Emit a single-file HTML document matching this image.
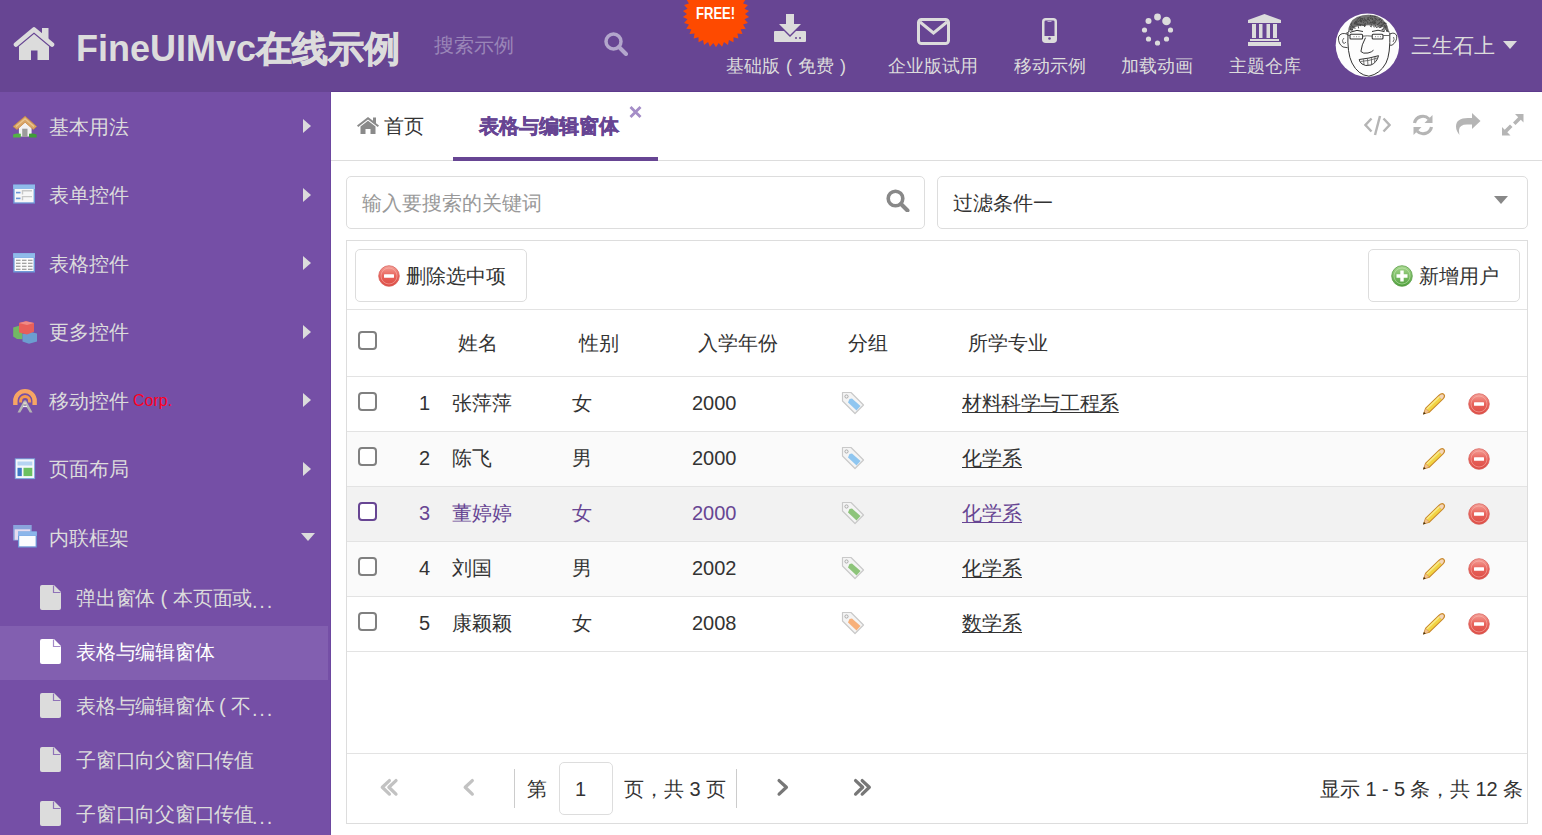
<!DOCTYPE html>
<html><head><meta charset="utf-8">
<style>
*{box-sizing:border-box;margin:0;padding:0}
html,body{width:1542px;height:835px;overflow:hidden;background:#fff;font-family:"Liberation Sans",sans-serif;color:#333}
.a{position:absolute;white-space:nowrap}
#hd{position:absolute;left:0;top:0;width:1542px;height:92px;background:#674593}
#sb{position:absolute;left:0;top:92px;width:331px;height:743px;background:#754fa6;border-right:1px solid #6d47a0}
.ht{color:#dcdcdc;font-size:18px;line-height:20px}
.mi{color:#dcdcdc;font-size:20px;line-height:24px}
.arr{position:absolute;width:0;height:0;border-top:7px solid transparent;border-bottom:7px solid transparent;border-left:8px solid #dcdcdc}
.sub{color:#dcdcdc;font-size:20px;line-height:24px;letter-spacing:-0.25px}
.box{position:absolute;border:1px solid #ddd;border-radius:5px;background:#fff}
.gl{position:absolute;left:347px;width:1180px;height:1px;background:#e3e3e3}
.td{font-size:20px;line-height:24px;color:#333}
.u{text-decoration:underline;text-decoration-thickness:1px;text-underline-offset:2px}
.cb{position:absolute;width:19px;height:19px;border:2px solid #808080;border-radius:4px;background:#fff}
</style></head><body>
<div id="hd">
  <!-- home icon -->
  <svg class="a" style="left:13px;top:27px" width="42" height="34" viewBox="0 0 42 34">
<path d="M3 17.5 L21 2.5 L39 17.5" fill="none" stroke="#dcdcdc" stroke-width="4.6" stroke-linecap="round" stroke-linejoin="round"/>
<rect x="29" y="1" width="6.5" height="11" fill="#dcdcdc"/>
<path d="M6 19.5 L21 7 L36 19.5 V33 H24.5 V23.5 H18 V33 H6 Z" fill="#dcdcdc"/>
</svg>
  <div class="a" style="left:76px;top:27.5px;font-size:36px;line-height:42px;font-weight:bold;color:#dcdcdc">FineUIMvc<span style="-webkit-text-stroke:0.9px #dcdcdc">在线示例</span></div>
  <div class="a" style="left:434px;top:33px;font-size:20px;line-height:24px;color:#9a86b8">搜索示例</div>
  <svg class="a" style="left:604px;top:32px" width="24" height="24" viewBox="0 0 24 24">
    <circle cx="9.5" cy="9.5" r="7.5" fill="none" stroke="#b3a6cc" stroke-width="3.5"/>
    <path d="M15 15 L22 22" stroke="#b3a6cc" stroke-width="4" stroke-linecap="round"/>
  </svg>
  <!-- FREE badge -->
  <svg class="a" style="left:681.5px;top:-20.5px" width="68" height="68" viewBox="-34 -34 68 68" id="burst"><polygon fill="#fe4a00" points="0.00,-33.20 2.68,-28.88 6.10,-32.63 7.94,-27.89 11.99,-30.96 12.93,-25.96 17.48,-28.23 17.48,-23.14 22.37,-24.54 21.43,-19.54 26.49,-20.01 24.66,-15.27 29.72,-14.80 27.04,-10.48 31.93,-9.09 28.51,-5.33 33.06,-3.06 29.00,0.00 33.06,3.06 28.51,5.33 31.93,9.09 27.04,10.48 29.72,14.80 24.66,15.27 26.49,20.01 21.43,19.54 22.37,24.54 17.48,23.14 17.48,28.23 12.93,25.96 11.99,30.96 7.94,27.89 6.10,32.63 2.68,28.88 0.00,33.20 -2.68,28.88 -6.10,32.63 -7.94,27.89 -11.99,30.96 -12.93,25.96 -17.48,28.23 -17.48,23.14 -22.37,24.54 -21.43,19.54 -26.49,20.01 -24.66,15.27 -29.72,14.80 -27.04,10.48 -31.93,9.09 -28.51,5.33 -33.06,3.06 -29.00,0.00 -33.06,-3.06 -28.51,-5.33 -31.93,-9.09 -27.04,-10.48 -29.72,-14.80 -24.66,-15.27 -26.49,-20.01 -21.43,-19.54 -22.37,-24.54 -17.48,-23.14 -17.48,-28.23 -12.93,-25.96 -11.99,-30.96 -7.94,-27.89 -6.10,-32.63 -2.68,-28.88"/></svg>
  <div class="a" style="left:696px;top:4px;font-size:16.5px;line-height:19px;font-weight:bold;color:#fff;transform:scaleX(0.79);transform-origin:0 0">FREE!</div>
  <!-- header items -->
  <svg class="a" style="left:774px;top:14px" width="32" height="28" viewBox="0 0 32 28">
    <path d="M12 0 H20 V10 H27 L16 21 L5 10 H12 Z" fill="#dcdcdc"/>
    <path d="M0 18 Q0 17 1 17 H10 L16 23 L22 17 H31 Q32 17 32 18 V27 Q32 28 31 28 H1 Q0 28 0 27 Z" fill="#dcdcdc"/>
    <circle cx="22" cy="24" r="1" fill="#674593"/><circle cx="26" cy="24" r="1" fill="#674593"/>
  </svg>
  <div class="a ht" style="left:726px;top:56px">基础版</div><div class="a ht" style="left:786px;top:56px">(</div><div class="a ht" style="left:798px;top:56px">免费</div><div class="a ht" style="left:840px;top:56px">)</div>
  <svg class="a" style="left:917px;top:18px" width="33" height="27" viewBox="0 0 33 27">
    <rect x="1.5" y="1.5" width="30" height="24" rx="3" fill="none" stroke="#dcdcdc" stroke-width="3"/>
    <path d="M3 4 L16.5 15 L30 4" fill="none" stroke="#dcdcdc" stroke-width="3"/>
  </svg>
  <div class="a ht" style="left:888px;top:56px">企业版试用</div>
  <svg class="a" style="left:1042px;top:18px" width="15" height="25" viewBox="0 0 15 25">
    <rect x="1.25" y="1.25" width="12.5" height="22.5" rx="2.5" fill="none" stroke="#dcdcdc" stroke-width="2.5"/>
    <rect x="2" y="18" width="11" height="5" fill="#dcdcdc"/>
    <circle cx="7.5" cy="20.5" r="1.3" fill="#674593"/>
    <rect x="5.5" y="3" width="4" height="1" fill="#b9abd0"/>
  </svg>
  <div class="a ht" style="left:1014px;top:56px">移动示例</div>
  <svg class="a" style="left:1140px;top:13px" width="34" height="34" viewBox="0 0 34 34">
    <circle cx="17.5" cy="4" r="3.4" fill="#dcdcdc"/>
    <circle cx="26.5" cy="8" r="4.3" fill="#dcdcdc"/>
    <circle cx="30.5" cy="17" r="2.6" fill="#dcdcdc"/>
    <circle cx="26.5" cy="26" r="2.6" fill="#dcdcdc"/>
    <circle cx="17.5" cy="30" r="2.6" fill="#dcdcdc"/>
    <circle cx="8.5" cy="26" r="2.6" fill="#dcdcdc"/>
    <circle cx="4.5" cy="17" r="2.6" fill="#dcdcdc"/>
    <circle cx="8.5" cy="8" r="3" fill="#dcdcdc"/>
  </svg>
  <div class="a ht" style="left:1121px;top:56px">加载动画</div>
  <svg class="a" style="left:1247px;top:13px" width="35" height="34" viewBox="0 0 35 34">
    <path d="M17.5 1 L34 7 V10 H1 V7 Z" fill="#dcdcdc"/>
    <rect x="5" y="11" width="4" height="14" fill="#dcdcdc"/>
    <rect x="12" y="11" width="3.5" height="14" fill="#dcdcdc"/>
    <rect x="19.5" y="11" width="3.5" height="14" fill="#dcdcdc"/>
    <rect x="26" y="11" width="4" height="14" fill="#dcdcdc"/>
    <rect x="3" y="26" width="29" height="2" fill="#dcdcdc"/>
    <rect x="1" y="29" width="33" height="4" fill="#dcdcdc"/>
  </svg>
  <div class="a ht" style="left:1229px;top:56px">主题仓库</div>
  <!-- avatar -->
  <svg class="a" style="left:1335px;top:13px" width="64" height="64" viewBox="0 0 64 64">
<circle cx="32.4" cy="32.2" r="31.7" fill="#fdfdfd"/>
<path d="M13 20 Q13.5 8 22 4 Q32 0 42 3 Q52 7 54.5 20 Q50 14 44 13 Q34 11.5 24 13 Q16 14.5 13 20 Z" fill="#707070"/>
<path d="M22.8 10.4 l0.8 1.8 M38.7 3.4 l2.2 0.1 M23.6 7.0 l-1.8 0.0 M47.3 11.4 l-0.6 1.3 M39.0 12.1 l-0.2 2.1 M40.5 4.0 l-1.4 1.3 M25.4 4.1 l-1.6 0.7 M42.5 13.1 l-1.4 1.8 M29.2 11.1 l0.4 2.3 M49.0 9.4 l1.3 0.6 M52.6 17.2 l-0.6 1.4 M33.8 6.2 l0.9 1.7 M37.0 12.1 l-1.3 1.9 M48.1 16.3 l-0.7 1.2 M48.3 16.2 l-1.8 0.6 M42.3 6.2 l-1.6 1.0 M24.7 4.8 l-2.1 1.1 M16.6 16.0 l0.4 1.3 M25.0 11.8 l-1.2 0.5 M38.2 3.1 l-1.0 1.2 M49.1 16.7 l-0.0 2.4 M25.7 4.5 l-0.4 1.2 M21.1 10.0 l-0.5 1.3 M14.7 18.2 l1.3 2.0 M49.8 12.2 l0.2 1.8 M39.4 9.3 l-0.4 1.9 M51.6 16.6 l0.4 2.0 M22.7 8.1 l-1.8 0.1 M35.5 2.2 l0.5 1.8 M13.8 18.1 l-0.5 1.2 M38.7 7.7 l-0.9 1.4 M42.0 11.5 l1.3 0.1 M40.7 13.4 l1.2 1.2 M37.3 5.9 l0.7 1.4 M28.1 9.1 l1.0 1.3 M44.7 5.6 l-0.4 2.0 M25.7 5.9 l-1.2 0.9 M20.7 10.4 l-0.8 1.1 M26.2 6.9 l-1.5 0.9 M48.1 9.2 l1.0 1.7 M49.3 12.5 l1.0 0.9 M34.7 4.1 l-1.8 1.3 M20.5 9.1 l-1.6 1.1 M46.1 9.5 l1.4 0.6 M45.5 8.5 l0.8 1.5 M30.2 6.7 l-1.3 0.3 M13.2 19.4 l-2.2 0.9 M30.8 12.6 l-1.4 0.3 M43.6 13.0 l-0.9 1.6 M24.9 7.5 l1.0 0.8 M37.1 5.5 l-1.0 0.7 M50.0 14.9 l-2.2 0.5 M49.9 13.9 l2.1 0.1 M20.0 9.6 l-0.9 1.6 M30.0 12.5 l-0.6 1.5 M23.4 13.3 l0.2 2.1 M27.4 5.1 l-0.2 2.2 M20.0 14.0 l-2.1 0.5 M46.8 6.9 l-0.9 2.1 M15.0 16.1 l1.2 1.4 M30.3 7.4 l-0.9 0.8 M15.2 15.5 l1.2 0.5 M53.0 18.6 l1.7 0.5 M26.0 6.8 l0.9 1.8 M37.1 6.3 l1.3 0.9 M18.1 13.1 l-1.0 1.3 M16.3 11.4 l0.7 1.8 M45.1 9.3 l-1.6 1.1 M30.7 6.3 l0.0 2.0 M30.2 9.8 l0.2 1.5 M35.0 9.7 l1.7 0.4 M30.5 11.8 l-1.6 0.3 M49.8 15.6 l1.2 1.3 M18.0 15.2 l-1.1 2.0 M45.5 12.2 l-1.3 1.4 M17.2 13.9 l1.4 0.0 M44.7 5.9 l1.3 0.4 M49.1 10.1 l2.2 0.2 M18.0 15.5 l-1.1 1.9 M52.0 17.2 l-1.0 0.7 M44.5 10.2 l-0.8 1.0 M43.7 14.0 l1.6 0.3 M36.1 11.2 l1.0 1.0 M23.2 10.9 l-1.2 1.2 M28.1 7.0 l0.8 1.5 M16.4 13.8 l-1.7 0.1 M43.6 6.4 l-1.2 1.7 M40.6 8.8 l0.1 2.0 M49.8 10.4 l2.0 0.6 M50.6 13.9 l0.4 2.0 M20.6 8.9 l1.5 1.1 M25.9 6.0 l-1.3 1.9 M25.1 11.1 l0.6 2.1 M37.0 5.2 l1.0 0.8 M32.7 6.2 l1.4 0.8 M26.2 11.5 l2.2 1.0 M32.7 8.6 l0.2 2.2 M46.7 11.8 l0.1 2.1 M48.1 11.3 l-1.6 1.7 M32.2 4.6 l1.5 1.4 M40.7 13.4 l-1.3 0.7 M20.8 8.8 l1.7 1.1 M48.2 15.6 l1.6 1.6 M25.9 8.0 l-0.9 1.0 M16.8 16.1 l1.0 1.3 M36.8 9.6 l1.6 0.0 M30.9 7.5 l1.5 1.2 M52.2 16.7 l-0.2 1.3 M24.3 11.0 l2.1 0.8 M50.3 10.4 l-1.6 0.3 M44.7 12.7 l1.2 1.6 M39.8 11.6 l1.4 1.6 M52.4 17.7 l-0.2 1.3 M33.2 5.9 l-1.3 1.6 M36.2 4.2 l-0.9 1.8 M20.3 14.8 l-0.6 1.2 M51.2 11.6 l1.0 1.8 M37.5 8.4 l-0.8 1.6 M25.8 5.4 l2.0 0.4 M43.9 10.3 l-1.1 1.2 M23.9 8.3 l-1.2 0.5 M33.7 4.7 l-1.2 1.1 M26.6 7.5 l-0.3 2.1 M27.5 12.0 l1.4 0.5 M17.1 10.2 l-1.6 1.3 M20.6 8.3 l0.5 2.0 M46.4 13.4 l-0.4 1.3 M29.3 4.6 l-0.2 1.9 M21.3 8.4 l-1.0 0.8 M45.9 14.4 l-1.6 0.3 M35.7 8.5 l-1.0 2.2 M41.2 6.7 l-1.6 0.8 M37.7 10.3 l2.1 0.0 M40.1 8.4 l-0.1 1.7 M20.9 11.2 l1.8 0.2 M39.5 7.7 l-0.5 2.3 M49.6 10.1 l-1.5 1.2 M15.1 16.4 l1.0 0.9 M35.1 12.3 l1.2 1.9 M41.5 5.1 l-1.7 0.8" stroke="#444" stroke-width="0.9" fill="none"/>
<path d="M13 19.6 Q12 40 17 50 Q23 62 33.9 63.2 Q45 61 51 50 Q55.5 41 54.8 20" fill="none" stroke="#333" stroke-width="1"/>
<path d="M13 21.5 Q6 18.5 3.5 24 Q3 31 8 34 L12.6 34.7" fill="none" stroke="#333" stroke-width="0.9"/>
<path d="M9 25 Q6.5 27 8 30 Q10 31 11 29" fill="none" stroke="#444" stroke-width="0.8"/>
<path d="M54.8 21 Q60 18.5 61.8 23 Q62 29 57 32.2 L54.8 32.2" fill="none" stroke="#333" stroke-width="0.9"/>
<path d="M58.5 24 Q60 26 58 29" fill="none" stroke="#444" stroke-width="0.8"/>
<path d="M16 19 Q22 16 28 18.5 M37 18.5 Q43 16 49 18.5" fill="none" stroke="#333" stroke-width="1"/>
<rect x="15" y="21.3" width="12.6" height="4.7" rx="1" fill="none" stroke="#333" stroke-width="1.1"/>
<rect x="37.2" y="21.3" width="10.8" height="4.7" rx="1" fill="none" stroke="#333" stroke-width="1.1"/>
<path d="M27.6 23.2 Q32.4 22.4 37.2 23.2 M15 22.5 L12.6 22.5 M48 22.5 L54.8 22.5" fill="none" stroke="#555" stroke-width="0.9"/>
<path d="M18.5 23.7 h1 M21 23.7 h1 M23.5 23.7 h1 M40 23.7 h1 M42.5 23.7 h1 M45 23.7 h1" stroke="#777" stroke-width="0.9"/>
<path d="M30.5 24.7 Q26.5 32 25.9 38.5 Q28 41 33 40 Q37 39 38.5 37.2" fill="none" stroke="#333" stroke-width="1"/>
<path d="M24.2 46.5 Q34 45.5 43.5 42.7 Q42 49.5 36 52 Q30 53.5 27 51 Q24.5 49 24.2 46.5 Z" fill="#fafafa" stroke="#333" stroke-width="1"/>
<path d="M25.5 48.5 Q34 48 42.5 45 M28.5 46.3 L29 51.5 M32.5 45.8 L33 52.8 M36.5 45.2 L36.5 52 M40 44 L39.5 49.5" fill="none" stroke="#555" stroke-width="0.8"/>
</svg>
  <div class="a" style="left:1411px;top:34px;font-size:21px;line-height:24px;color:#dcdcdc">三生石上</div>
  <div class="a" style="left:1503px;top:41px;width:0;height:0;border-left:7px solid transparent;border-right:7px solid transparent;border-top:8px solid #dcdcdc"></div>
</div>

<div id="sb">
<svg class="a" style="left:5px;top:13px" width="40" height="40" viewBox="0 0 40 40"><path d="M13.9 20 L20 15.5 L26.6 20 V31.5 H13.9 Z" fill="#f2f2f2"/>
<rect x="17.2" y="23.7" width="5.3" height="8.2" fill="#9b9b9b"/>
<path d="M8.1 29.5 Q12 27.8 15.8 28.8 V32.6 H8.1 Z" fill="#52b344"/>
<path d="M24 28.8 Q28 27.8 31.6 29.5 V32.6 H24 Z" fill="#3f9e37"/>
<path d="M8.1 21.5 L20.1 11.3 L31.6 21.5 L28.3 24.5 L20.1 17.2 L12 24.5 Z" fill="#d9a566" stroke="#c98a45" stroke-width="0.8" stroke-linejoin="round"/>
<path d="M11 21.5 L20.1 13.8 L29 21.5" fill="none" stroke="#e9c48e" stroke-width="1.4"/></svg>
<div class="a mi" style="left:49px;top:22.5px">基本用法</div>
<div class="arr" style="left:303px;top:27px"></div>
<svg class="a" style="left:5px;top:83px" width="40" height="40" viewBox="0 0 40 40"><rect x="8.2" y="9.6" width="21.8" height="19" fill="#6f9ad8"/>
<rect x="8.2" y="9.6" width="21.8" height="4.4" fill="#8fbbea"/>
<rect x="9.6" y="14" width="19" height="13.3" fill="#f7f7f7"/>
<rect x="11" y="16.8" width="4.5" height="1.6" fill="#6a93d6"/>
<rect x="11" y="22.6" width="4.5" height="1.6" fill="#6a93d6"/>
<path d="M17.5 19.5 V15.8 H27 M17.5 25.3 V21.6 H27" fill="none" stroke="#c8c8c8" stroke-width="1.4"/></svg>
<div class="a mi" style="left:49px;top:91px">表单控件</div>
<div class="arr" style="left:303px;top:95.5px"></div>
<svg class="a" style="left:5px;top:151px" width="40" height="40" viewBox="0 0 40 40"><rect x="8.2" y="10.2" width="21.8" height="19.3" fill="#6f9ad8"/>
<rect x="8.2" y="10.2" width="21.8" height="4.6" fill="#8fbbea"/>
<rect x="9.6" y="15" width="19" height="13" fill="#fafafa"/>
<g fill="#9a9a9a"><rect x="11" y="16.7" width="4.5" height="1.2"/><rect x="17" y="16.7" width="4.5" height="1.2"/><rect x="23" y="16.7" width="4.5" height="1.2"/>
<rect x="11" y="19.7" width="4.5" height="1.2"/><rect x="17" y="19.7" width="4.5" height="1.2"/><rect x="23" y="19.7" width="4.5" height="1.2"/>
<rect x="11" y="22.7" width="4.5" height="1.2"/><rect x="17" y="22.7" width="4.5" height="1.2"/><rect x="23" y="22.7" width="4.5" height="1.2"/>
<rect x="11" y="25.7" width="4.5" height="1.2"/><rect x="17" y="25.7" width="4.5" height="1.2"/><rect x="23" y="25.7" width="4.5" height="1.2"/></g></svg>
<div class="a mi" style="left:49px;top:159.5px">表格控件</div>
<div class="arr" style="left:303px;top:164px"></div>
<svg class="a" style="left:5px;top:220px" width="40" height="40" viewBox="0 0 40 40"><path d="M8.2 15.5 L14 13.8 L17.5 16 V27.2 L12 27 L8.2 24.5 Z" fill="#72b864"/>
<path d="M17.5 22 L26 20 L32 21.5 V29.5 L24 31.7 L17.5 29.5 Z" fill="#6c9ed0"/>
<path d="M14 11 L21 9.3 L29 11 V19.8 L22 22.5 L14 20.5 Z" fill="#e85f5a"/>
<path d="M14 11 L21 9.3 L29 11 L22 13 Z" fill="#f08a84"/></svg>
<div class="a mi" style="left:49px;top:228px">更多控件</div>
<div class="arr" style="left:303px;top:232.5px"></div>
<svg class="a" style="left:5px;top:288px" width="40" height="40" viewBox="0 0 40 40"><path d="M10.35 24.9 V20.8 A9.65 9.65 0 0 1 29.65 20.8 V24.9" fill="none" stroke="#f7a564" stroke-width="4.4"/>
<path d="M15.6 22.5 V21.1 A4.5 4.5 0 0 1 24.6 21.1 V22.5" fill="none" stroke="#f59a50" stroke-width="3"/>
<path d="M19 20.5 H21 L27.5 32.5 H24.8 L20 24.5 L15.2 32.5 H12.5 Z" fill="#b5b5b5"/>
<rect x="18.5" y="22.5" width="3" height="1.3" fill="#f0e0d0"/><rect x="18" y="25.8" width="4" height="1.3" fill="#f0f0f0"/></svg>
<div class="a mi" style="left:49px;top:296.5px">移动控件</div>
<div class="a" style="left:133px;top:300px;font-size:16px;line-height:18px;color:#ff0022">Corp.</div>
<div class="arr" style="left:303px;top:301px"></div>
<svg class="a" style="left:5px;top:355.5px" width="40" height="40" viewBox="0 0 40 40"><rect x="9.8" y="10.3" width="20.3" height="20.8" fill="#7aa3dc"/>
<rect x="10.8" y="11.3" width="18.3" height="18.8" fill="#f4f7fb"/>
<rect x="12.5" y="13.5" width="14.8" height="4" fill="#b6d4f2"/>
<rect x="12.5" y="19.8" width="4.3" height="8.3" fill="#3f78c6"/>
<rect x="18.5" y="19.8" width="8.8" height="8.3" fill="#6cc061"/></svg>
<div class="a mi" style="left:49px;top:365px">页面布局</div>
<div class="arr" style="left:303px;top:369.5px"></div>
<svg class="a" style="left:5px;top:424px" width="40" height="40" viewBox="0 0 40 40"><rect x="8.2" y="9" width="18.5" height="15.5" fill="#8aa4dc"/>
<rect x="9.7" y="13.3" width="15.5" height="10.5" fill="#e6dcef"/>
<rect x="13" y="15.5" width="18.8" height="16" fill="#6e9ad8"/>
<rect x="13" y="15.5" width="18.8" height="4.3" fill="#8cb6ea"/>
<rect x="14.2" y="20" width="16.4" height="10.3" fill="#fbfcfe"/></svg>
<div class="a mi" style="left:49px;top:433.5px">内联框架</div>
<div class="a" style="left:301px;top:440.5px;width:0;height:0;border-left:7px solid transparent;border-right:7px solid transparent;border-top:8px solid #dcdcdc"></div>
<svg class="a" style="left:40px;top:493px" width="21" height="25" viewBox="0 0 21 25"><path d="M2 0 H14 L21 7 V23 Q21 25 19 25 H2 Q0 25 0 23 V2 Q0 0 2 0 Z" fill="#dcdcdc"/><path d="M14 0 V7 H21" fill="#754fa6" opacity="0"/><path d="M13.5 0.5 L13.5 7.5 L20.5 7.5" fill="none" stroke="#8f72b8" stroke-width="1.2"/></svg>
<div class="a sub" style="left:76px;top:494px;color:#dcdcdc">弹出窗体</div><div class="a sub" style="left:160.5px;top:494px;color:#dcdcdc">(</div><div class="a sub" style="left:173px;top:494px;color:#dcdcdc">本页面或</div><div class="a sub" style="left:252px;top:497px;color:#dcdcdc;letter-spacing:1.8px">...</div>
<div class="a" style="left:0;top:534px;width:328px;height:54px;background:#825fb0"></div>
<svg class="a" style="left:40px;top:547px" width="21" height="25" viewBox="0 0 21 25"><path d="M2 0 H14 L21 7 V23 Q21 25 19 25 H2 Q0 25 0 23 V2 Q0 0 2 0 Z" fill="#ffffff"/><path d="M14 0 V7 H21" fill="#754fa6" opacity="0"/><path d="M13.5 0.5 L13.5 7.5 L20.5 7.5" fill="none" stroke="#a58bc8" stroke-width="1.2"/></svg>
<div class="a sub" style="left:76px;top:548px;color:#ffffff">表格与编辑窗体</div>
<svg class="a" style="left:40px;top:601px" width="21" height="25" viewBox="0 0 21 25"><path d="M2 0 H14 L21 7 V23 Q21 25 19 25 H2 Q0 25 0 23 V2 Q0 0 2 0 Z" fill="#dcdcdc"/><path d="M14 0 V7 H21" fill="#754fa6" opacity="0"/><path d="M13.5 0.5 L13.5 7.5 L20.5 7.5" fill="none" stroke="#8f72b8" stroke-width="1.2"/></svg>
<div class="a sub" style="left:76px;top:602px;color:#dcdcdc">表格与编辑窗体</div><div class="a sub" style="left:219px;top:602px;color:#dcdcdc">(</div><div class="a sub" style="left:231px;top:602px;color:#dcdcdc">不</div><div class="a sub" style="left:252px;top:605px;color:#dcdcdc;letter-spacing:1.8px">...</div>
<svg class="a" style="left:40px;top:655px" width="21" height="25" viewBox="0 0 21 25"><path d="M2 0 H14 L21 7 V23 Q21 25 19 25 H2 Q0 25 0 23 V2 Q0 0 2 0 Z" fill="#dcdcdc"/><path d="M14 0 V7 H21" fill="#754fa6" opacity="0"/><path d="M13.5 0.5 L13.5 7.5 L20.5 7.5" fill="none" stroke="#8f72b8" stroke-width="1.2"/></svg>
<div class="a sub" style="left:76px;top:656px;color:#dcdcdc">子窗口向父窗口传值</div>
<svg class="a" style="left:40px;top:709px" width="21" height="25" viewBox="0 0 21 25"><path d="M2 0 H14 L21 7 V23 Q21 25 19 25 H2 Q0 25 0 23 V2 Q0 0 2 0 Z" fill="#dcdcdc"/><path d="M14 0 V7 H21" fill="#754fa6" opacity="0"/><path d="M13.5 0.5 L13.5 7.5 L20.5 7.5" fill="none" stroke="#8f72b8" stroke-width="1.2"/></svg>
<div class="a sub" style="left:76px;top:710px;color:#dcdcdc">子窗口向父窗口传值</div><div class="a sub" style="left:252px;top:713px;color:#dcdcdc;letter-spacing:1.8px">...</div>
</div>

<div id="main">
<div class="a" style="left:331px;top:91px;width:1211px;height:1px;background:#5d3a8c"></div>
<div class="a" style="left:331px;top:160px;width:1211px;height:1px;background:#dddddd"></div>
<div class="a" style="left:453px;top:157px;width:205px;height:4px;background:#674593"></div>
<svg class="a" style="left:357px;top:117px" width="22" height="17" viewBox="0 0 22 17">
<path d="M0 8.5 L11 0 L16 3.8 V0.5 H19 V6.2 L22 8.5 L20.8 10 L11 2.5 L1.2 10 Z" fill="#8a8a8a"/>
<path d="M3.5 9.5 L11 3.8 L18.5 9.5 V17 H13.5 V12 H8.5 V17 H3.5 Z" fill="#8a8a8a"/></svg>
<div class="a td" style="left:384px;top:114px">首页</div>
<div class="a td" style="left:479px;top:114px;font-weight:bold;color:#674593;-webkit-text-stroke:0.5px #674593">表格与编辑窗体</div>
<svg class="a" style="left:629px;top:106px" width="13" height="12" viewBox="0 0 13 12"><path d="M1.5 1 L11.5 11 M11.5 1 L1.5 11" stroke="#a48dc7" stroke-width="2.8"/></svg>
<svg class="a" style="left:1364px;top:115px" width="27" height="21" viewBox="0 0 27 21">
<path d="M7.5 3.5 L1.5 10 L7.5 16.5 M19.5 3.5 L25.5 10 L19.5 16.5" fill="none" stroke="#b5b5b5" stroke-width="2.4"/>
<path d="M16 1 L11 20" stroke="#b5b5b5" stroke-width="2.4"/></svg>
<svg class="a" style="left:1412px;top:114px" width="22" height="22" viewBox="0 0 22 22">
<path d="M2.5 9 A8.5 8.5 0 0 1 17 5" fill="none" stroke="#b5b5b5" stroke-width="3.2"/>
<path d="M20.5 1 V9 H12.5 Z" fill="#b5b5b5"/>
<path d="M19.5 13 A8.5 8.5 0 0 1 5 17" fill="none" stroke="#b5b5b5" stroke-width="3.2"/>
<path d="M1.5 21 V13 H9.5 Z" fill="#b5b5b5"/></svg>
<svg class="a" style="left:1456px;top:113px" width="25" height="22" viewBox="0 0 25 22">
<path d="M16 0 L24.5 8 L16 16 V11.5 H11 Q3.5 11.5 3 17 Q3 19.5 3.5 22 Q0 17.5 0 13.5 Q0 5 12 5 H16 Z" fill="#b5b5b5"/></svg>
<svg class="a" style="left:1502px;top:114px" width="22" height="22" viewBox="0 0 22 22">
<path d="M13 0 H21.5 V8.5 L18.8 5.8 L13.5 11 L11 8.5 L16.2 3.2 Z" fill="#b5b5b5"/>
<path d="M8.5 21.5 H0 V13 L2.7 15.7 L8 10.5 L10.5 13 L5.3 18.3 Z" fill="#b5b5b5"/></svg>
<div class="box" style="left:346px;top:176px;width:579px;height:53px"></div>
<div class="a td" style="left:362px;top:191px;color:#999">输入要搜索的关键词</div>
<svg class="a" style="left:886px;top:189px" width="24" height="23" viewBox="0 0 24 23">
<circle cx="9.5" cy="9.5" r="7.3" fill="none" stroke="#888" stroke-width="3.6"/>
<path d="M15 15 L21.5 21.5" stroke="#888" stroke-width="4" stroke-linecap="round"/></svg>
<div class="box" style="left:937px;top:176px;width:591px;height:53px"></div>
<div class="a td" style="left:953px;top:191px">过滤条件一</div>
<div class="a" style="left:1494px;top:196px;width:0;height:0;border-left:7px solid transparent;border-right:7px solid transparent;border-top:8px solid #888"></div>
<div class="a" style="left:346px;top:240px;width:1182px;height:584px;border:1px solid #dddddd"></div>
<div class="gl" style="top:309px"></div>
<div class="box" style="left:355px;top:249px;width:172px;height:53px"></div>
<svg class="a" style="left:378px;top:265px" width="22" height="22" viewBox="0 0 22 22">
<defs><linearGradient id="dgb" x1="0" y1="0" x2="0" y2="1"><stop offset="0" stop-color="#f5a39a"/><stop offset="0.5" stop-color="#e8625a"/><stop offset="1" stop-color="#dc4c44"/></linearGradient></defs>
<circle cx="11" cy="11" r="10.3" fill="url(#dgb)" stroke="#d9615b" stroke-width="0.8"/>
<circle cx="11" cy="11" r="8" fill="none" stroke="#f7b8b0" stroke-width="0.8" opacity="0.7"/>
<rect x="6" y="9.3" width="10" height="3.4" rx="0.5" fill="#fff"/></svg>
<div class="a td" style="left:406px;top:264px">删除选中项</div>
<div class="box" style="left:1368px;top:249px;width:152px;height:53px"></div>
<svg class="a" style="left:1391px;top:265px" width="22" height="22" viewBox="0 0 22 22">
<defs><linearGradient id="ag" x1="0" y1="0" x2="0" y2="1"><stop offset="0" stop-color="#a8d88f"/><stop offset="1" stop-color="#4e9f3c"/></linearGradient></defs>
<circle cx="11" cy="11" r="10.3" fill="url(#ag)" stroke="#5a9e48" stroke-width="0.8"/>
<circle cx="11" cy="11" r="8" fill="none" stroke="#c8eab5" stroke-width="0.8" opacity="0.7"/>
<path d="M9.3 5.5 H12.7 V9.3 H16.5 V12.7 H12.7 V16.5 H9.3 V12.7 H5.5 V9.3 H9.3 Z" fill="#fff"/></svg>
<div class="a td" style="left:1419px;top:264px">新增用户</div>
<div class="gl" style="top:376px"></div>
<div class="cb" style="left:358px;top:331px"></div>
<div class="a td" style="left:458px;top:331px">姓名</div>
<div class="a td" style="left:579px;top:331px">性别</div>
<div class="a td" style="left:698px;top:331px">入学年份</div>
<div class="a td" style="left:848px;top:331px">分组</div>
<div class="a td" style="left:968px;top:331px">所学专业</div>
<div class="a" style="left:347px;top:377px;width:1180px;height:54px;background:#fff"></div>
<div class="gl" style="top:431px"></div>
<div class="cb" style="left:358px;top:392px;"></div>
<div class="a td" style="left:419px;top:391px;color:#333">1</div>
<div class="a td" style="left:452px;top:391px;color:#333">张萍萍</div>
<div class="a td" style="left:572px;top:391px;color:#333">女</div>
<div class="a td" style="left:692px;top:391px;color:#333">2000</div>
<svg class="a" style="left:841px;top:391px" width="24" height="24" viewBox="0 0 24 24">
<path d="M1.5 1.5 H10 L22.5 14 L14 22.5 L1.5 10 Z" fill="#f4f4f4" stroke="#c9c9c9" stroke-width="1.2" stroke-linejoin="round"/>
<path d="M8.5 8 L11 7.5 L19.5 15 L15.5 19.5 L7 11.5 Z" fill="#8fc6f0"/>
<circle cx="5.5" cy="5.5" r="1.6" fill="none" stroke="#aaa" stroke-width="1"/></svg>
<div class="a td u" style="left:962px;top:391px;color:#333;letter-spacing:-0.4px">材料科学与工程系</div>
<svg class="a" style="left:1421px;top:392px" width="26" height="25" viewBox="0 0 26 25"><g transform="translate(2,22.5) rotate(-44)">
<path d="M0 0 L6 -3.2 H25 Q29.5 -3.2 29.5 0 Q29.5 3.2 25 3.2 H6 Z" fill="#c9882a"/>
<path d="M6.5 -2.2 H24 V2.2 H6.5 Z" fill="#f2d443"/>
<path d="M6.5 -2.2 H24 V-0.6 H6.5 Z" fill="#f8e98a"/>
<path d="M24 -2.2 Q28.3 -2.2 28.3 0 Q28.3 2.2 24 2.2 Z" fill="#f4d6b8"/>
<path d="M1 0 L6.2 -2.4 V2.4 Z" fill="#f0c08c"/>
<path d="M0 0 L2.6 -1.3 V1.3 Z" fill="#4a300c"/>
</g></svg>
<svg class="a" style="left:1468px;top:393px" width="22" height="22" viewBox="0 0 22 22">
<defs><linearGradient id="dgr0" x1="0" y1="0" x2="0" y2="1"><stop offset="0" stop-color="#f5a39a"/><stop offset="0.5" stop-color="#e8625a"/><stop offset="1" stop-color="#dc4c44"/></linearGradient></defs>
<circle cx="11" cy="11" r="10.3" fill="url(#dgr0)" stroke="#d9615b" stroke-width="0.8"/>
<circle cx="11" cy="11" r="8" fill="none" stroke="#f7b8b0" stroke-width="0.8" opacity="0.7"/>
<rect x="6" y="9.3" width="10" height="3.4" rx="0.5" fill="#fff"/></svg>
<div class="a" style="left:347px;top:432px;width:1180px;height:54px;background:#fafafa"></div>
<div class="gl" style="top:486px"></div>
<div class="cb" style="left:358px;top:447px;"></div>
<div class="a td" style="left:419px;top:446px;color:#333">2</div>
<div class="a td" style="left:452px;top:446px;color:#333">陈飞</div>
<div class="a td" style="left:572px;top:446px;color:#333">男</div>
<div class="a td" style="left:692px;top:446px;color:#333">2000</div>
<svg class="a" style="left:841px;top:446px" width="24" height="24" viewBox="0 0 24 24">
<path d="M1.5 1.5 H10 L22.5 14 L14 22.5 L1.5 10 Z" fill="#f4f4f4" stroke="#c9c9c9" stroke-width="1.2" stroke-linejoin="round"/>
<path d="M8.5 8 L11 7.5 L19.5 15 L15.5 19.5 L7 11.5 Z" fill="#8fc6f0"/>
<circle cx="5.5" cy="5.5" r="1.6" fill="none" stroke="#aaa" stroke-width="1"/></svg>
<div class="a td u" style="left:962px;top:446px;color:#333">化学系</div>
<svg class="a" style="left:1421px;top:447px" width="26" height="25" viewBox="0 0 26 25"><g transform="translate(2,22.5) rotate(-44)">
<path d="M0 0 L6 -3.2 H25 Q29.5 -3.2 29.5 0 Q29.5 3.2 25 3.2 H6 Z" fill="#c9882a"/>
<path d="M6.5 -2.2 H24 V2.2 H6.5 Z" fill="#f2d443"/>
<path d="M6.5 -2.2 H24 V-0.6 H6.5 Z" fill="#f8e98a"/>
<path d="M24 -2.2 Q28.3 -2.2 28.3 0 Q28.3 2.2 24 2.2 Z" fill="#f4d6b8"/>
<path d="M1 0 L6.2 -2.4 V2.4 Z" fill="#f0c08c"/>
<path d="M0 0 L2.6 -1.3 V1.3 Z" fill="#4a300c"/>
</g></svg>
<svg class="a" style="left:1468px;top:448px" width="22" height="22" viewBox="0 0 22 22">
<defs><linearGradient id="dgr1" x1="0" y1="0" x2="0" y2="1"><stop offset="0" stop-color="#f5a39a"/><stop offset="0.5" stop-color="#e8625a"/><stop offset="1" stop-color="#dc4c44"/></linearGradient></defs>
<circle cx="11" cy="11" r="10.3" fill="url(#dgr1)" stroke="#d9615b" stroke-width="0.8"/>
<circle cx="11" cy="11" r="8" fill="none" stroke="#f7b8b0" stroke-width="0.8" opacity="0.7"/>
<rect x="6" y="9.3" width="10" height="3.4" rx="0.5" fill="#fff"/></svg>
<div class="a" style="left:347px;top:487px;width:1180px;height:54px;background:#f2f2f2"></div>
<div class="gl" style="top:541px"></div>
<div class="cb" style="left:358px;top:502px;border-color:#674593"></div>
<div class="a td" style="left:419px;top:501px;color:#674593">3</div>
<div class="a td" style="left:452px;top:501px;color:#674593">董婷婷</div>
<div class="a td" style="left:572px;top:501px;color:#674593">女</div>
<div class="a td" style="left:692px;top:501px;color:#674593">2000</div>
<svg class="a" style="left:841px;top:501px" width="24" height="24" viewBox="0 0 24 24">
<path d="M1.5 1.5 H10 L22.5 14 L14 22.5 L1.5 10 Z" fill="#f4f4f4" stroke="#c9c9c9" stroke-width="1.2" stroke-linejoin="round"/>
<path d="M8.5 8 L11 7.5 L19.5 15 L15.5 19.5 L7 11.5 Z" fill="#8dc47a"/>
<circle cx="5.5" cy="5.5" r="1.6" fill="none" stroke="#aaa" stroke-width="1"/></svg>
<div class="a td u" style="left:962px;top:501px;color:#674593">化学系</div>
<svg class="a" style="left:1421px;top:502px" width="26" height="25" viewBox="0 0 26 25"><g transform="translate(2,22.5) rotate(-44)">
<path d="M0 0 L6 -3.2 H25 Q29.5 -3.2 29.5 0 Q29.5 3.2 25 3.2 H6 Z" fill="#c9882a"/>
<path d="M6.5 -2.2 H24 V2.2 H6.5 Z" fill="#f2d443"/>
<path d="M6.5 -2.2 H24 V-0.6 H6.5 Z" fill="#f8e98a"/>
<path d="M24 -2.2 Q28.3 -2.2 28.3 0 Q28.3 2.2 24 2.2 Z" fill="#f4d6b8"/>
<path d="M1 0 L6.2 -2.4 V2.4 Z" fill="#f0c08c"/>
<path d="M0 0 L2.6 -1.3 V1.3 Z" fill="#4a300c"/>
</g></svg>
<svg class="a" style="left:1468px;top:503px" width="22" height="22" viewBox="0 0 22 22">
<defs><linearGradient id="dgr2" x1="0" y1="0" x2="0" y2="1"><stop offset="0" stop-color="#f5a39a"/><stop offset="0.5" stop-color="#e8625a"/><stop offset="1" stop-color="#dc4c44"/></linearGradient></defs>
<circle cx="11" cy="11" r="10.3" fill="url(#dgr2)" stroke="#d9615b" stroke-width="0.8"/>
<circle cx="11" cy="11" r="8" fill="none" stroke="#f7b8b0" stroke-width="0.8" opacity="0.7"/>
<rect x="6" y="9.3" width="10" height="3.4" rx="0.5" fill="#fff"/></svg>
<div class="a" style="left:347px;top:542px;width:1180px;height:54px;background:#fafafa"></div>
<div class="gl" style="top:596px"></div>
<div class="cb" style="left:358px;top:557px;"></div>
<div class="a td" style="left:419px;top:556px;color:#333">4</div>
<div class="a td" style="left:452px;top:556px;color:#333">刘国</div>
<div class="a td" style="left:572px;top:556px;color:#333">男</div>
<div class="a td" style="left:692px;top:556px;color:#333">2002</div>
<svg class="a" style="left:841px;top:556px" width="24" height="24" viewBox="0 0 24 24">
<path d="M1.5 1.5 H10 L22.5 14 L14 22.5 L1.5 10 Z" fill="#f4f4f4" stroke="#c9c9c9" stroke-width="1.2" stroke-linejoin="round"/>
<path d="M8.5 8 L11 7.5 L19.5 15 L15.5 19.5 L7 11.5 Z" fill="#8dc47a"/>
<circle cx="5.5" cy="5.5" r="1.6" fill="none" stroke="#aaa" stroke-width="1"/></svg>
<div class="a td u" style="left:962px;top:556px;color:#333">化学系</div>
<svg class="a" style="left:1421px;top:557px" width="26" height="25" viewBox="0 0 26 25"><g transform="translate(2,22.5) rotate(-44)">
<path d="M0 0 L6 -3.2 H25 Q29.5 -3.2 29.5 0 Q29.5 3.2 25 3.2 H6 Z" fill="#c9882a"/>
<path d="M6.5 -2.2 H24 V2.2 H6.5 Z" fill="#f2d443"/>
<path d="M6.5 -2.2 H24 V-0.6 H6.5 Z" fill="#f8e98a"/>
<path d="M24 -2.2 Q28.3 -2.2 28.3 0 Q28.3 2.2 24 2.2 Z" fill="#f4d6b8"/>
<path d="M1 0 L6.2 -2.4 V2.4 Z" fill="#f0c08c"/>
<path d="M0 0 L2.6 -1.3 V1.3 Z" fill="#4a300c"/>
</g></svg>
<svg class="a" style="left:1468px;top:558px" width="22" height="22" viewBox="0 0 22 22">
<defs><linearGradient id="dgr3" x1="0" y1="0" x2="0" y2="1"><stop offset="0" stop-color="#f5a39a"/><stop offset="0.5" stop-color="#e8625a"/><stop offset="1" stop-color="#dc4c44"/></linearGradient></defs>
<circle cx="11" cy="11" r="10.3" fill="url(#dgr3)" stroke="#d9615b" stroke-width="0.8"/>
<circle cx="11" cy="11" r="8" fill="none" stroke="#f7b8b0" stroke-width="0.8" opacity="0.7"/>
<rect x="6" y="9.3" width="10" height="3.4" rx="0.5" fill="#fff"/></svg>
<div class="a" style="left:347px;top:597px;width:1180px;height:54px;background:#fff"></div>
<div class="gl" style="top:651px"></div>
<div class="cb" style="left:358px;top:612px;"></div>
<div class="a td" style="left:419px;top:611px;color:#333">5</div>
<div class="a td" style="left:452px;top:611px;color:#333">康颖颖</div>
<div class="a td" style="left:572px;top:611px;color:#333">女</div>
<div class="a td" style="left:692px;top:611px;color:#333">2008</div>
<svg class="a" style="left:841px;top:611px" width="24" height="24" viewBox="0 0 24 24">
<path d="M1.5 1.5 H10 L22.5 14 L14 22.5 L1.5 10 Z" fill="#f4f4f4" stroke="#c9c9c9" stroke-width="1.2" stroke-linejoin="round"/>
<path d="M8.5 8 L11 7.5 L19.5 15 L15.5 19.5 L7 11.5 Z" fill="#f7b07a"/>
<circle cx="5.5" cy="5.5" r="1.6" fill="none" stroke="#aaa" stroke-width="1"/></svg>
<div class="a td u" style="left:962px;top:611px;color:#333">数学系</div>
<svg class="a" style="left:1421px;top:612px" width="26" height="25" viewBox="0 0 26 25"><g transform="translate(2,22.5) rotate(-44)">
<path d="M0 0 L6 -3.2 H25 Q29.5 -3.2 29.5 0 Q29.5 3.2 25 3.2 H6 Z" fill="#c9882a"/>
<path d="M6.5 -2.2 H24 V2.2 H6.5 Z" fill="#f2d443"/>
<path d="M6.5 -2.2 H24 V-0.6 H6.5 Z" fill="#f8e98a"/>
<path d="M24 -2.2 Q28.3 -2.2 28.3 0 Q28.3 2.2 24 2.2 Z" fill="#f4d6b8"/>
<path d="M1 0 L6.2 -2.4 V2.4 Z" fill="#f0c08c"/>
<path d="M0 0 L2.6 -1.3 V1.3 Z" fill="#4a300c"/>
</g></svg>
<svg class="a" style="left:1468px;top:613px" width="22" height="22" viewBox="0 0 22 22">
<defs><linearGradient id="dgr4" x1="0" y1="0" x2="0" y2="1"><stop offset="0" stop-color="#f5a39a"/><stop offset="0.5" stop-color="#e8625a"/><stop offset="1" stop-color="#dc4c44"/></linearGradient></defs>
<circle cx="11" cy="11" r="10.3" fill="url(#dgr4)" stroke="#d9615b" stroke-width="0.8"/>
<circle cx="11" cy="11" r="8" fill="none" stroke="#f7b8b0" stroke-width="0.8" opacity="0.7"/>
<rect x="6" y="9.3" width="10" height="3.4" rx="0.5" fill="#fff"/></svg>
<div class="gl" style="top:753px"></div>
<svg class="a" style="left:378px;top:777px" width="22" height="21" viewBox="0 0 22 21"><path d="M11.4 3.6 L4.3 10.3 L11.4 17.1 M18 3.6 L10.9 10.3 L18 17.1" fill="none" stroke="#c2c2c2" stroke-width="3.3" stroke-linecap="round" stroke-linejoin="round"/></svg>
<svg class="a" style="left:460px;top:777px" width="16" height="21" viewBox="0 0 16 21"><path d="M12.3 3.6 L5.2 10.3 L12.3 17.1" fill="none" stroke="#c2c2c2" stroke-width="3.3" stroke-linecap="round" stroke-linejoin="round"/></svg>
<div class="a" style="left:514px;top:769px;width:1px;height:39px;background:#ccc"></div>
<div class="a td" style="left:527px;top:777px">第</div>
<div class="box" style="left:559px;top:762px;width:54px;height:53px"></div>
<div class="a td" style="left:575px;top:777px">1</div>
<div class="a td" style="left:624px;top:777px">页，共 3 页</div>
<div class="a" style="left:736px;top:769px;width:1px;height:39px;background:#ccc"></div>
<svg class="a" style="left:775px;top:777px" width="16" height="21" viewBox="0 0 16 21"><path d="M4.1 3.6 L11.4 10.3 L4.1 17.1" fill="none" stroke="#777" stroke-width="3.3" stroke-linecap="round" stroke-linejoin="round"/></svg>
<svg class="a" style="left:852px;top:777px" width="22" height="21" viewBox="0 0 22 21"><path d="M3.6 3.6 L10.7 10.3 L3.6 17.1 M10.2 3.6 L17.3 10.3 L10.2 17.1" fill="none" stroke="#777" stroke-width="3.3" stroke-linecap="round" stroke-linejoin="round"/></svg>
<div class="a td" style="right:19px;top:777px;letter-spacing:-0.1px">显示 1 - 5 条，共 12 条</div>
</div>
</body></html>
